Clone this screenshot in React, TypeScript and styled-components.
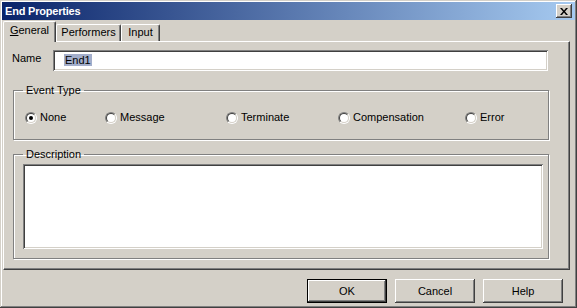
import React from 'react';
import styled, { createGlobalStyle } from 'styled-components';

const GlobalStyle = createGlobalStyle`
  html, body {
    margin: 0;
    padding: 0;
    background: #d4d0c8;
  }
  body {
    font-family: 'Liberation Sans', Arial, sans-serif;
    font-size: 11px;
    color: #000;
  }
`;

const Window = styled.div`
  box-sizing: border-box;
  width: 577px;
  height: 308px;
  padding: 2px;
  display: flex;
  flex-direction: column;
  background: #d4d0c8;
  box-shadow: inset -1px -1px #404040, inset 1px 1px #d4d0c8, inset -2px -2px #808080, inset 2px 2px #fff;
`;

const TitleBar = styled.div`
  height: 18px;
  display: flex;
  align-items: center;
  justify-content: space-between;
  padding: 0 3px 0 3px;
  background: linear-gradient(to right, #0a246a, #a6caf0);
`;

const Title = styled.span`
  color: #fff;
  font-weight: bold;
  font-size: 11px;
  letter-spacing: -0.2px;
`;

const CloseButton = styled.button`
  box-sizing: border-box;
  width: 16px;
  height: 14px;
  padding: 0;
  border: none;
  display: flex;
  align-items: center;
  justify-content: center;
  background: #d4d0c8;
  box-shadow: inset -1px -1px #404040, inset 1px 1px #fff, inset -2px -2px #808080, inset 2px 2px #d4d0c8;
`;

const Body = styled.div`
  flex: 1;
  display: flex;
  flex-direction: column;
  padding: 2px 5px 0 1px;
`;

const TabStrip = styled.div`
  display: flex;
  align-items: flex-end;
  height: 20px;
  position: relative;
  z-index: 1;
  margin-bottom: -1px;
`;

const Tab = styled.div<{ $active?: boolean; $w: number }>`
  box-sizing: border-box;
  width: ${(p) => p.$w}px;
  height: ${(p) => (p.$active ? 21 : 17)}px;
  padding-top: ${(p) => (p.$active ? 2 : 1)}px;
  text-align: center;
  background: #d4d0c8;
  border-top: 1px solid #fff;
  border-left: 1px solid #fff;
  border-right: 1px solid #404040;
  border-radius: 2px 2px 0 0;
  box-shadow: inset -1px 0 #808080;
  margin-bottom: ${(p) => (p.$active ? 0 : 1)}px;

  u {
    text-decoration: underline;
  }
`;

const TabPanel = styled.div`
  box-sizing: border-box;
  height: 229px;
  padding: 8px 0 0 8px;
  border-top: 1px solid #fff;
  border-left: 1px solid #fff;
  border-right: 1px solid #404040;
  border-bottom: 1px solid #404040;
  box-shadow: inset -1px -1px #808080;
  display: flex;
  flex-direction: column;
`;

const FieldRow = styled.div`
  display: flex;
  align-items: flex-start;
  padding-right: 21px;
`;

const FieldLabel = styled.label`
  width: 41px;
  padding-top: 2px;
`;

const sunken = `
  box-shadow: inset 1px 1px #808080, inset -1px -1px #fff, inset 2px 2px #404040, inset -2px -2px #d4d0c8;
`;

const TextInput = styled.div`
  box-sizing: border-box;
  flex: 1;
  height: 21px;
  padding: 4px 0 0 11px;
  background: #fff;
  ${sunken}
`;

const Selected = styled.span`
  background: #a3aecb;
  padding: 0 1px;
`;

const GroupBox = styled.fieldset<{ $mt: number }>`
  margin: ${(p) => p.$mt}px 20px 0 1px;
  padding: 0;
  border: 1px solid #808080;
  box-shadow: inset 1px 1px #fff, 1px 1px #fff;
  min-width: 0;
`;

const Legend = styled.legend`
  margin-left: 9px;
  padding: 0 3px;
  line-height: 13px;
`;

const RadioRow = styled.div`
  display: grid;
  grid-template-columns: 80px 121px 112px 127px auto;
  align-items: center;
  padding: 14px 0 15px 11px;
`;

const RadioOption = styled.label`
  display: flex;
  align-items: center;
  gap: 3px;
  line-height: 13px;
`;

const RadioOuter = styled.span`
  box-sizing: border-box;
  width: 12px;
  height: 12px;
  border-radius: 50%;
  border: 1px solid;
  border-color: #808080 #fff #fff #808080;
  display: flex;
`;

const RadioInner = styled.span<{ $checked?: boolean }>`
  box-sizing: border-box;
  width: 10px;
  height: 10px;
  border-radius: 50%;
  border: 1px solid;
  border-color: #404040 #d4d0c8 #d4d0c8 #404040;
  background: #fff;
  display: flex;
  align-items: center;
  justify-content: center;

  &::after {
    content: '';
    width: 4px;
    height: 4px;
    border-radius: 50%;
    background: ${(p) => (p.$checked ? '#000' : 'transparent')};
  }
`;

const TextArea = styled.div`
  height: 85px;
  margin: 3px 5px 9px 9px;
  background: #fff;
  ${sunken}
`;

const Footer = styled.div`
  display: flex;
  justify-content: flex-end;
  gap: 8px;
  padding: 9px 7px 0 0;
`;

const Button = styled.button<{ $default?: boolean }>`
  box-sizing: border-box;
  width: 80px;
  height: 24px;
  padding: 0;
  font-family: 'Liberation Sans', Arial, sans-serif;
  font-size: 11px;
  color: #000;
  background: #d4d0c8;
  border: ${(p) => (p.$default ? '1px solid #000' : 'none')};
  box-shadow: inset -1px -1px #404040, inset 1px 1px #fff, inset -2px -2px #808080, inset 2px 2px #d4d0c8;
`;

const Radio = ({ label, checked }: { label: string; checked?: boolean }) => (
  <RadioOption>
    <RadioOuter>
      <RadioInner $checked={checked} />
    </RadioOuter>
    {label}
  </RadioOption>
);

const App = (): React.ReactElement => (
  <>
    <GlobalStyle />
    <Window>
      <TitleBar>
        <Title>End Properties</Title>
        <CloseButton>
          <svg width="8" height="7" viewBox="0 0 8 7">
            <path d="M0 0h2l2 2.5L6 0h2L5 3.5 8 7H6L4 4.5 2 7H0l3-3.5z" fill="#000" />
          </svg>
        </CloseButton>
      </TitleBar>
      <Body>
        <TabStrip>
          <Tab $active $w={53}>
            <u>G</u>eneral
          </Tab>
          <Tab $w={65}>Performers</Tab>
          <Tab $w={39}>Input</Tab>
        </TabStrip>
        <TabPanel>
          <FieldRow>
            <FieldLabel>Name</FieldLabel>
            <TextInput>
              <Selected>End1</Selected>
            </TextInput>
          </FieldRow>
          <GroupBox $mt={13}>
            <Legend>Event Type</Legend>
            <RadioRow>
              <Radio label="None" checked />
              <Radio label="Message" />
              <Radio label="Terminate" />
              <Radio label="Compensation" />
              <Radio label="Error" />
            </RadioRow>
          </GroupBox>
          <GroupBox $mt={8}>
            <Legend>Description</Legend>
            <TextArea />
          </GroupBox>
        </TabPanel>
        <Footer>
          <Button $default>OK</Button>
          <Button>Cancel</Button>
          <Button>Help</Button>
        </Footer>
      </Body>
    </Window>
  </>
);

export default App;
